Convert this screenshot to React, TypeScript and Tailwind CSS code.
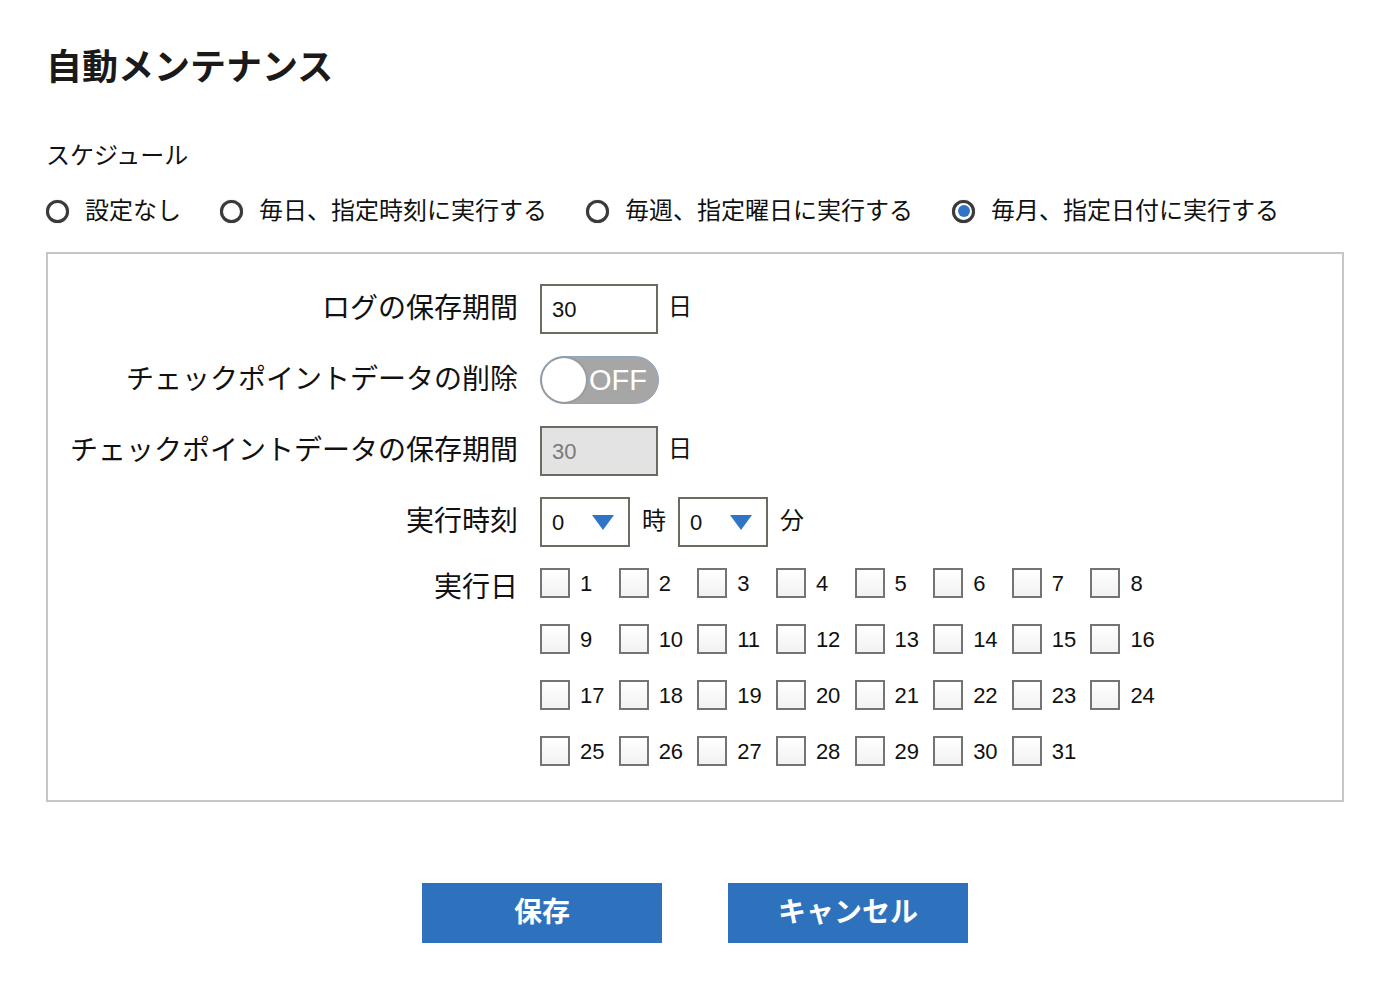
import React, { useState } from 'react';

const FONT = { fontFamily: '"Liberation Sans", "Noto Sans CJK JP", sans-serif' };

const scheduleOptions = [
  '設定なし',
  '毎日、指定時刻に実行する',
  '毎週、指定曜日に実行する',
  '毎月、指定日付に実行する',
];

const Radio = ({ checked }: { checked: boolean }) => (
  <span className="flex h-[23px] w-[23px] items-center justify-center rounded-full border-[3px] border-[#3a3a3a] bg-white shadow-[0_0_1px_#888]">
    {checked && <span className="h-[12px] w-[12px] rounded-full bg-[#2f74c6]" />}
  </span>
);

const Select = ({ value }: { value: string }) => (
  <div className="flex h-[50px] w-[90px] items-center justify-between border-2 border-[#6e6a62] bg-white pl-[10px] pr-[14px] text-[22px]">
    <span>{value}</span>
    <svg width="22" height="15" viewBox="0 0 22 15">
      <path d="M0 0 H22 L11 15 Z" fill="#2f74c6" />
    </svg>
  </div>
);

const App = () => {
  const [schedule, setSchedule] = useState(3);
  const days = Array.from({ length: 31 }, (_, i) => i + 1);

  return (
    <div style={FONT} className="min-h-screen bg-white pl-[46px] pr-[43px] pt-[46px] text-[#111]">
      <h1 className="text-[36px] font-bold leading-[44px] text-[#1a1a1a]">自動メンテナンス</h1>

      {/* Schedule */}
      <div className="mt-[50px] text-[24px] leading-[32px]">スケジュール</div>
      <div className="mt-[23px] flex items-center gap-x-[39px] text-[24px] leading-[32px]">
        {scheduleOptions.map((label, i) => (
          <label key={label} className="flex cursor-pointer items-center gap-[16px]" onClick={() => setSchedule(i)}>
            <Radio checked={schedule === i} />
            <span>{label}</span>
          </label>
        ))}
      </div>

      {/* Settings box */}
      <div className="mt-[25px] border-2 border-[#c6c6c6] pb-[34px] pt-[30px]">
        <div className="grid grid-cols-[470px_1fr] gap-x-[22px] gap-y-[21px]">
          <div className="flex h-[50px] items-center justify-end text-[28px]">ログの保存期間</div>
          <div className="flex h-[50px] items-center gap-[10px]">
            <div className="flex h-[50px] w-[118px] items-center border-2 border-[#6e6a62] bg-white pl-[10px] text-[22px]">30</div>
            <span className="mb-[4px] text-[24px]">日</span>
          </div>

          <div className="flex h-[50px] items-center justify-end text-[28px]">チェックポイントデータの削除</div>
          <div className="flex h-[50px] items-center">
            <div className="flex h-[48px] w-[119px] items-center rounded-full border border-[#8ea6c4] bg-[#a6a6a6] p-[1px]">
              <span className="h-[44px] w-[44px] rounded-full bg-white shadow-[0_0_3px_#777]" />
              <span className="ml-[3px] text-[29px] leading-none text-white">OFF</span>
            </div>
          </div>

          <div className="flex h-[50px] items-center justify-end text-[28px]">チェックポイントデータの保存期間</div>
          <div className="flex h-[50px] items-center gap-[10px]">
            <div className="flex h-[50px] w-[118px] items-center border-2 border-[#6e6a62] bg-[#e3e3e3] pl-[10px] text-[22px] text-[#7a7a7a]">30</div>
            <span className="mb-[4px] text-[24px]">日</span>
          </div>

          <div className="flex h-[50px] items-center justify-end text-[28px]">実行時刻</div>
          <div className="flex h-[50px] items-center gap-[12px] text-[24px]">
            <Select value="0" />
            <span className="mb-[2px]">時</span>
            <Select value="0" />
            <span className="mb-[2px]">分</span>
          </div>

          <div className="flex h-[34px] items-end justify-end text-[28px] leading-none">実行日</div>
          <div className="grid w-[629px] grid-cols-8 gap-y-[26px]">
            {days.map((d) => (
              <label key={d} className="flex h-[30px] items-center gap-[10px] text-[22px]">
                <span className="h-[30px] w-[30px] border-2 border-[#747474] bg-gradient-to-b from-white to-[#f2f2f2]" />
                <span>{d}</span>
              </label>
            ))}
          </div>
        </div>
      </div>

      {/* Actions */}
      <div className="mt-[81px] flex justify-center gap-[66px]">
        <button className="h-[60px] w-[240px] bg-[#2e72bd] text-[28px] font-bold text-white">保存</button>
        <button className="h-[60px] w-[240px] bg-[#2e72bd] text-[28px] font-bold text-white">キャンセル</button>
      </div>
    </div>
  );
};

export default App;
